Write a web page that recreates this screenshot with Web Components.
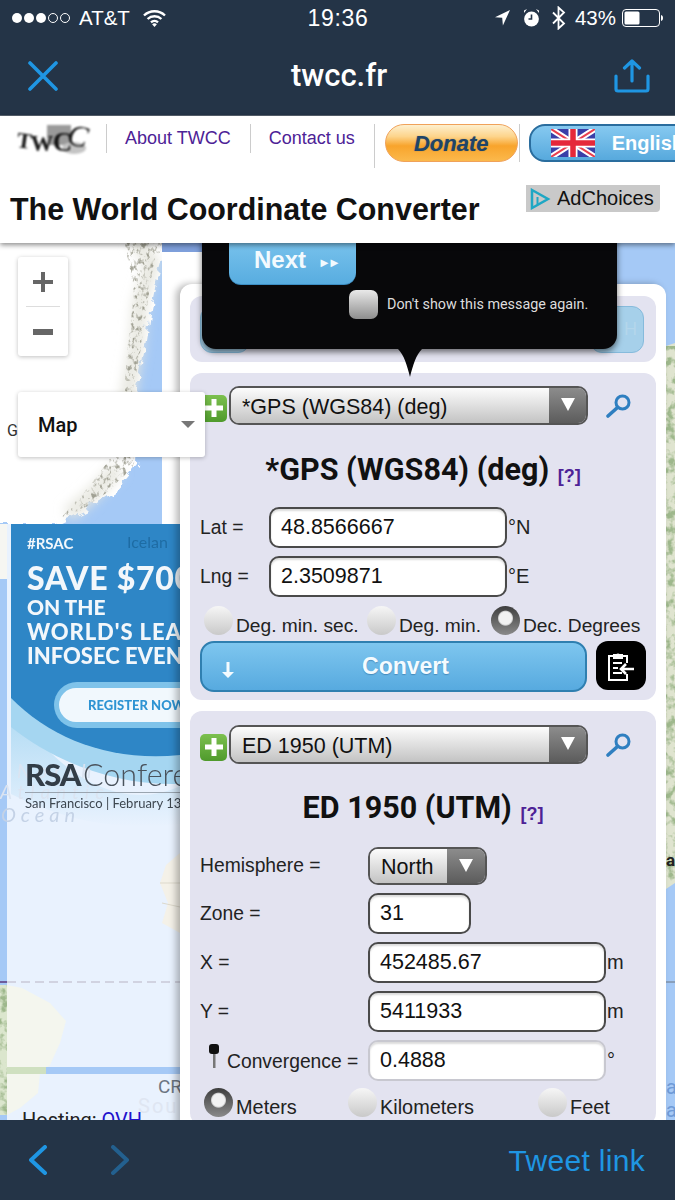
<!DOCTYPE html>
<html lang="en">
<head>
<meta charset="utf-8">
<title>twcc.fr</title>
<style>
  html, body { margin: 0; padding: 0; }
  body {
    width: 675px; height: 1200px; overflow: hidden;
    display: flex; flex-direction: column;
    font-family: "Liberation Sans", Arial, sans-serif; color: #111;
    background: #243447;
  }
</style>
</head>
<body>
<ios-header></ios-header>
<site-header></site-header>
<map-view>
  <map-canvas></map-canvas>
  <rsa-ad></rsa-ad>
  <zoom-control></zoom-control>
  <converter-panel>
    <coord-card heading="*GPS (WGS84) (deg)" style="--label:69px;--pad:13px;--title-top:25px;--title-bottom:17px">
      <coord-row label="Lat =" unit="°N"><coord-input value="48.8566667" width="238"></coord-input></coord-row>
      <coord-row label="Lng =" unit="°E"><coord-input value="2.3509871" width="238"></coord-input></coord-row>
      <radio-group columns="163px 124px 1fr">
        <radio-opt label="Deg. min. sec."></radio-opt>
        <radio-opt label="Deg. min."></radio-opt>
        <radio-opt label="Dec. Degrees" checked></radio-opt>
      </radio-group>
      <convert-bar></convert-bar>
    </coord-card>
    <coord-card heading="ED 1950 (UTM)" style="--label:168px;--pad:14px;--title-top:24px;--title-bottom:19px">
      <coord-row label="Hemisphere ="><gel-select width="119" height="38" arrow="38">North</gel-select></coord-row>
      <coord-row label="Zone ="><coord-input value="31" width="103"></coord-input></coord-row>
      <coord-row label="X =" unit="m"><coord-input value="452485.67" width="238"></coord-input></coord-row>
      <coord-row label="Y =" unit="m"><coord-input value="5411933" width="238"></coord-input></coord-row>
      <coord-row label="Convergence =" unit="°" pin><coord-input value="0.4888" width="238" faint></coord-input></coord-row>
      <radio-group columns="144px 190px 1fr" style="margin-top:-1px;--radio-size:19.900px">
        <radio-opt label="Meters" checked></radio-opt>
        <radio-opt label="Kilometers"></radio-opt>
        <radio-opt label="Feet"></radio-opt>
      </radio-group>
    </coord-card>
  </converter-panel>
  <layer-select></layer-select>
</map-view>
<ios-toolbar></ios-toolbar>

<script>
const BLUE = '#1f96e3';

class IosHeader extends HTMLElement {
  connectedCallback() {
    this.attachShadow({ mode: 'open' });
    this.shadowRoot.innerHTML = `
      <style>
        :host { display: block; flex: none; height: 116px; background: #243447; color: #fff; position: relative; z-index: 3; box-sizing: border-box; }
        .status { height: 36px; display: grid; grid-template-columns: 1fr auto 1fr; align-items: center; padding: 0 12px; font-size: 20.500px; }
        .left, .right { display: flex; align-items: center; }
        .right { justify-content: flex-end; }
        .dots { display: flex; gap: 2px; margin-right: 9px; }
        .dots i { width: 10px; height: 10px; border-radius: 50%; background: #fff; box-sizing: border-box; }
        .dots i.off { background: none; border: 1px solid #fff; }
        .time { font-size: 23px; letter-spacing: .7px; padding-left: 1px; }
        .nav { height: 79px; display: grid; grid-template-columns: 1fr auto 1fr; align-items: center; padding: 0 25px 0 28px; border-bottom: 1px solid #58636f; }
        .nav b { font: 500 31px Roboto, sans-serif; }
        .nav svg:last-child { justify-self: end; }
      </style>
      <div class="status">
        <div class="left">
          <div class="dots"><i></i><i></i><i></i><i class="off"></i><i class="off"></i></div>
          <span>AT&amp;T</span>
          <svg style="margin-left:13px" width="23" height="18" viewBox="0 0 23 18" fill="none" stroke="#fff" stroke-width="2.4"><path d="M1 6.5a15 15 0 0 1 21 0"/><path d="M4.6 10a10 10 0 0 1 13.8 0"/><path d="M8 13.4a5.2 5.2 0 0 1 7 0"/><path d="M11.5 18l-2.4-2.8a3.6 3.6 0 0 1 4.8 0z" fill="#fff" stroke="none"/></svg>
        </div>
        <div class="time">19:36</div>
        <div class="right">
          <svg width="15" height="16" viewBox="0 0 15 16"><path d="M15 0L0 7.2l7.2.6.7 7.7z" fill="#fff"/></svg>
          <svg style="margin-left:12px" width="19" height="20" viewBox="0 0 19 20"><path d="M2 2.5L5 1 2 5zM17 2.5L14 1l3 4z" fill="#fff"/><circle cx="9.5" cy="11" r="7.4" fill="#fff"/><path d="M9.5 6.5V11H6.5" stroke="#243447" stroke-width="1.6" fill="none"/></svg>
          <svg style="margin-left:10px" width="15" height="24" viewBox="0 0 15 24" fill="none" stroke="#fff" stroke-width="1.8"><path d="M2 6.5l11 11-5.5 5V1.5l5.500 5-11 11"/></svg>
          <span style="margin-left:9px">43%</span>
          <svg style="margin-left:6px" width="41" height="18" viewBox="0 0 41 18"><rect x=".5" y=".5" width="37" height="17" rx="3.500" fill="none" stroke="#fff"/><rect x="2.500" y="2.500" width="15" height="13" rx="1.500" fill="#fff"/><path d="M39 6c1.500.3 2 1.500 2 3s-.5 2.700-2 3z" fill="#fff"/></svg>
        </div>
      </div>
      <div class="nav">
        <svg width="30" height="30" viewBox="0 0 30 30" stroke="${BLUE}" stroke-width="3.600" stroke-linecap="round"><path d="M2 2l26 26M28 2L2 28"/></svg>
        <b>twcc.fr</b>
        <svg width="36" height="34" viewBox="0 0 36 34" fill="none" stroke="${BLUE}" stroke-width="3.200" stroke-linecap="round" stroke-linejoin="round"><path d="M18 22V2M10.500 9L18 2l7.500 7"/><path d="M2 17v13a2 2 0 0 0 2 2h28a2 2 0 0 0 2-2V17"/></svg>
      </div>`;
  }
}

class SiteHeader extends HTMLElement {
  connectedCallback() {
    this.attachShadow({ mode: 'open' });
    this.shadowRoot.innerHTML = `
      <style>
        :host { display: block; flex: none; height: 127px; background: #fff; box-shadow: 0 2px 5px rgba(0,0,0,.45); position: relative; z-index: 3; overflow: hidden; }
        .row1 { display: flex; align-items: flex-start; padding-top: 8px; height: 44px; }
        .logo { width: 106px; height: 32px; flex: none; position: relative; font: 700 27px "Liberation Serif", serif; color: #111; filter: blur(.9px); box-sizing: border-box; padding: 0 0 0 17px; line-height: 33px; white-space: nowrap; }
        .logo::before { content: ""; position: absolute; left: 47px; top: 1px; width: 24px; height: 20px; background: #9a9a9a; }
        .logo::after { content: ""; position: absolute; left: 62px; top: 18px; width: 24px; height: 12px; background: #c4c4c4; border-radius: 50%; }
        .logo span { position: relative; z-index: 1; display: inline-block; }
        .logo .t { transform: translateY(-3px) rotate(8deg); font-size: 22px; }
        .logo .w { transform: translateY(0) scaleX(.95); margin-left: -2px; font-size: 24px; }
        .logo .c1 { transform: translateY(0); margin-left: -1px; }
        .logo .c2 { transform: translateY(-5px) rotate(12deg); font-style: italic; font-weight: 400; font-size: 30px; margin-left: -4px; }
        .sep { width: 1px; height: 29px; background: #ccc; flex: none; }
        .sep.tall { height: 44px; }
        .sep.mid { height: 38px; }
        a { color: #4d2296; font-size: 18px; padding: 4px 19px 0 18px; text-decoration: none; flex: none; white-space: nowrap; }
        .donate { flex: none; width: 133px; height: 38px; margin: 0 1px 0 10px; box-sizing: border-box; border: 1px solid #f0a25a; border-radius: 19px;
          background: linear-gradient(#fdf0cf 0, #fdd48b 32%, #f8a42c 58%, #fbb94c 100%); text-align: center;
          font: italic 700 22px/37px "Liberation Sans", sans-serif; color: #1f4468; text-shadow: 0 0 1px rgba(31,68,104,.6); }
        .english { flex: none; width: 200px; height: 38px; margin-left: 9px; box-sizing: border-box; border: 2px solid #2a6d9e; border-radius: 16px 0 0 16px;
          background: linear-gradient(#86c9f0, #57a9dd); display: flex; align-items: center; padding-left: 20px; color: #fff; font-weight: 700; font-size: 20px; }
        .english svg { margin-right: 17px; }
        .row2 { display: flex; justify-content: space-between; padding: 0 15px 0 10px; height: 60px; margin-top: 8px; }
        h1 { margin: 0; font-size: 30.450px; font-weight: 700; line-height: 34px; padding-top: 16px; white-space: nowrap; }
        .ad { box-sizing: border-box; margin-top: 9px; width: 134px; height: 27px; background: #c9c9c9; border-radius: 0 0 4px 0; display: flex; align-items: center; gap: 6px; padding-left: 3px; font-size: 20px; color: #111; }
      </style>
      <div class="row1">
        <div class="logo"><span class="t">T</span><span class="w">W</span><span class="c1">C</span><span class="c2">C</span></div>
        <div class="sep"></div>
        <a>About TWCC</a>
        <div class="sep"></div>
        <a>Contact us</a>
        <div class="sep tall"></div>
        <div class="donate">Donate</div>
        <div class="sep mid"></div>
        <div class="english">
          <svg width="44" height="28" viewBox="0 0 44 28">
            <rect width="44" height="28" fill="#3a3fa8"/>
            <path d="M0 0l44 28M44 0L0 28" stroke="#fff" stroke-width="6"/>
            <path d="M0 0l44 28M44 0L0 28" stroke="#e8404f" stroke-width="2"/>
            <path d="M22 0v28M0 14h44" stroke="#fff" stroke-width="9"/>
            <path d="M22 0v28M0 14h44" stroke="#e5283a" stroke-width="5.500"/>
          </svg>
          English
        </div>
      </div>
      <div class="row2">
        <h1>The World Coordinate Converter</h1>
        <div class="ad">
          <svg width="22" height="22" viewBox="0 0 22 22" fill="none" stroke="#1ea7c4" stroke-width="2.500"><path d="M3 2l16 9-16 9z"/><path d="M8.500 9v7" stroke-width="2"/></svg>
          AdChoices
        </div>
      </div>`;
  }
}

class MapView extends HTMLElement {
  connectedCallback() {
    this.attachShadow({ mode: 'open' });
    this.shadowRoot.innerHTML = `
      <style>
        :host { display: block; flex: 1; min-height: 0; position: relative; overflow: hidden; background: #a5c9f6; z-index: 1; }
      </style>
      <slot></slot>`;
  }
}

class MapCanvas extends HTMLElement {
  connectedCallback() {
    this.attachShadow({ mode: 'open' });
    this.shadowRoot.innerHTML = `
      <style>
        :host { position: absolute; inset: 0; display: block; }
        svg { display: block; }
        text { font-family: Roboto, "Liberation Sans", sans-serif; }
      </style>
      <svg width="675" height="877" viewBox="0 0 675 877">
        <defs>
          <filter id="edge" x="-20%" y="-5%" width="140%" height="110%">
            <feTurbulence type="fractalNoise" baseFrequency=".09" numOctaves="3" seed="7"/>
            <feDisplacementMap in="SourceGraphic" scale="13"/>
          </filter>
          <filter id="rock" x="-10%" y="-5%" width="120%" height="110%" color-interpolation-filters="sRGB">
            <feTurbulence type="fractalNoise" baseFrequency=".26 .18" numOctaves="3" seed="11"/>
            <feColorMatrix values="0 0 0 0 .56  0 0 0 0 .56  0 0 0 0 .5  4 0 0 0 -2"/>
            <feComposite in2="SourceGraphic" operator="in"/>
          </filter>
          <filter id="soft" x="-40%" y="-10%" width="180%" height="120%"><feGaussianBlur stdDeviation="6"/></filter>
          <filter id="terrain" x="0" y="0" width="100%" height="100%" color-interpolation-filters="sRGB">
            <feTurbulence type="fractalNoise" baseFrequency=".12" numOctaves="3" seed="3"/>
            <feColorMatrix values="0 0 0 0 .62  0 0 0 0 .72  0 0 0 0 .55  4 0 0 0 -1.800"/>
            <feComposite in2="SourceGraphic" operator="in"/>
          </filter>
        </defs>
        <rect width="675" height="877" fill="#a5c9f6"/>
        <!-- Greenland coast -->
        <path d="M-30 -10H170L158 30 150 70 144 110 136 150 140 190 138 222 116 248 84 268 56 281H-30Z" fill="#fff" filter="url(#edge)"/>
        <path d="M134 -5L152 20 140 60 136 105 128 150 136 195 M118 225 94 250 68 272" fill="none" stroke="#e6e6de" stroke-width="14" filter="url(#soft)"/>
        <path d="M124 -5L165 -5 152 30 146 70 140 110 132 150 136 190 134 222 112 246 80 268 62 274 92 240 118 205 124 150 128 100 134 50Z" fill="#000" filter="url(#rock)" opacity=".8"/>
        <!-- white frame behind the panel -->
        <rect x="162" y="0" width="60" height="9" fill="#7e9fdb"/>
        <rect x="162" y="9" width="60" height="300" fill="#fff"/>
        <!-- pale column -->
        <rect x="0" y="281" width="7" height="55" fill="#f6f6f2"/>
        <rect x="0" y="336" width="7" height="541" fill="#a5c9f6"/>
        <rect x="7" y="281" width="173" height="596" fill="#e9f2fe"/>
        <rect x="0" y="738" width="7" height="2" fill="#6d5d9c"/>
        <path d="M7 739H180" stroke="#c9c9d8" stroke-width="1.500" stroke-dasharray="9 5"/>
        <!-- continents under the veil -->
        <path d="M180 610L166 622 160 640 168 660 162 680 180 690Z" fill="#f4f1e8"/>
        <path d="M160 640H180M162 660L180 664" stroke="#ddd9cc" fill="none"/>
        <path d="M7 742L22 745 50 760 66 778 60 800 50 822 40 830 38 850 20 865 7 872Z" fill="#f4f6ee"/>
        <rect x="46" y="824" width="134" height="7" fill="#a5c9f6"/>
        <rect x="7" y="824" width="39" height="7" fill="#cfe0c0"/>
        <rect x="0" y="742" width="7" height="130" fill="#dbe6cd"/>
        <rect x="0" y="742" width="7" height="130" fill="#000" filter="url(#terrain)"/>
        <text x="158" y="850" font-size="19" fill="#6d7682">CR</text>
        <text x="138" y="870" font-size="20" fill="#dfe6f2" letter-spacing="2">Sou</text>
        <text x="22" y="884" font-size="20" font-family="Liberation Sans" fill="#222">Hosting: <tspan fill="#2211cc">OVH</tspan></text>
        <text x="7" y="193" font-size="16" fill="#333">G</text>
        <!-- right edge land -->
        <path d="M666 103L675 100V640L666 646Z" fill="#dfe4cf"/>
        <rect x="666" y="103" width="9" height="537" fill="#000" filter="url(#terrain)"/>
        <path d="M666 739H675" stroke="#6d7682" stroke-width="1"/>
        <text x="666" y="623" font-size="17" font-weight="700" fill="#222">a</text>
        <text x="666" y="851" font-size="20" fill="#6f9bd8">a</text>
        <text x="666" y="874" font-size="20" fill="#6f9bd8">a</text>
      </svg>`;
  }
}

class RsaAd extends HTMLElement {
  connectedCallback() {
    this.attachShadow({ mode: 'open' });
    this.shadowRoot.innerHTML = `
      <style>
        :host { position: absolute; left: 0; top: 281px; width: 180px; height: 310px; display: block; }
        svg { display: block; }
        text { font-family: Lato, "Open Sans", sans-serif; }
      </style>
      <svg width="180" height="310" viewBox="-11 0 180 310">
        <defs>
          <linearGradient id="pale" x1="0" y1="0" x2="0" y2="1"><stop offset="0" stop-color="#a9d8f2"/><stop offset="1" stop-color="#e9f2fe"/></linearGradient>
          <filter id="b"><feGaussianBlur stdDeviation=".35"/></filter>
        </defs>
        <path d="M0 174C40 250 110 290 169 262V300C100 310 40 290 0 270Z" fill="url(#pale)"/>
        <path d="M0 0H169V260C100 262 40 235 0 203Z" fill="#a5d6f1"/>
        <path d="M0 0H169V231C100 238 40 215 0 174Z" fill="#2e86c6"/>
        <g filter="url(#b)">
          <text x="6" y="254" font-size="19" font-style="italic" letter-spacing="7" fill="#dbe4f1" font-family="Roboto">North</text>
          <text x="-11" y="275" font-size="19" font-style="italic" letter-spacing="6" fill="#dbe4f1" font-family="Roboto">Atlantic</text>
          <text x="-10" y="298" font-size="20" font-style="italic" letter-spacing="5" fill="#c4d2e6" font-family="Roboto">Ocean</text>
          <text x="116" y="24" font-size="16" fill="#1f6ca4" font-family="Roboto">Icelan</text>
          <text x="16" y="25" font-size="15" font-weight="700" fill="#f2f7fb">#RSAC</text>
          <text x="16" y="66" font-size="32" font-weight="900" letter-spacing=".7" fill="#f2f7fb">SAVE $700</text>
          <text x="16" y="91" font-size="21" font-weight="900" fill="#f2f7fb">ON THE</text>
          <text x="16" y="116" font-size="22" font-weight="900" letter-spacing=".9" fill="#f2f7fb">WORLD'S LEADING</text>
          <text x="16" y="140" font-size="22" font-weight="900" fill="#f2f7fb">INFOSEC EVENT</text>
          <rect x="43" y="158" width="200" height="46" rx="23" fill="#7fc3ea"/>
          <rect x="48" y="164" width="190" height="34" rx="17" fill="#f1f8fd"/>
          <text x="77" y="186" font-size="13" font-weight="900" fill="#2f94d3">REGISTER NOW</text>
          <text x="14" y="262" font-size="31" font-weight="900" fill="#333c47" letter-spacing="-1">RSA</text>
          <text x="72" y="262" font-size="30.500" font-weight="300" fill="#4a525c">Conference</text>
          <rect x="14" y="268" width="155" height="1" fill="#9aa5b0"/>
          <text x="14" y="284" font-size="13" fill="#3d4650">San Francisco | February 13-17</text>
        </g>
      </svg>`;
  }
}

class ZoomControl extends HTMLElement {
  connectedCallback() {
    this.attachShadow({ mode: 'open' });
    this.shadowRoot.innerHTML = `
      <style>
        :host { position: absolute; left: 18px; top: 14px; width: 50px; height: 99px; background: #fff; border-radius: 3px; box-shadow: 0 1px 4px rgba(0,0,0,.25); display: flex; flex-direction: column; align-items: center; }
        div { flex: 1; display: flex; align-items: center; justify-content: center; width: 100%; }
        hr { width: 34px; margin: 0; border: 0; border-top: 1px solid #ddd; }
      </style>
      <div><svg width="20" height="20" viewBox="0 0 20 20"><path d="M8 0h4v8h8v4h-8v8H8v-8H0V8h8z" fill="#666"/></svg></div>
      <hr>
      <div><svg width="20" height="6" viewBox="0 0 20 6"><rect width="20" height="6" fill="#666"/></svg></div>`;
  }
}

class LayerSelect extends HTMLElement {
  connectedCallback() {
    this.attachShadow({ mode: 'open' });
    this.shadowRoot.innerHTML = `
      <style>
        :host { position: absolute; left: 18px; top: 149px; width: 187px; height: 65px; background: #fff; border-radius: 3px; box-shadow: 0 1px 4px rgba(0,0,0,.25); display: flex; align-items: center; justify-content: space-between; padding: 0 10px 0 20px; box-sizing: border-box; font: 500 20px Roboto, sans-serif; color: #111; }
      </style>
      <span>Map</span>
      <svg width="14" height="7" viewBox="0 0 14 7"><path d="M0 0h14L7 7z" fill="#777"/></svg>`;
  }
}

class ConverterPanel extends HTMLElement {
  connectedCallback() {
    this.attachShadow({ mode: 'open' });
    this.shadowRoot.innerHTML = `
      <style>
        :host { position: absolute; left: 180px; top: 41px; width: 486px; box-sizing: border-box; background: #fff; border-radius: 12px 12px 0 0; box-shadow: -4px 0 7px rgba(0,0,0,.28); padding: 12px 10px 20px; display: flex; flex-direction: column; gap: 11px; }
        .group { height: 66px; background: #e3e3f0; border-radius: 12px; padding: 10px 12px 0 10px; box-sizing: border-box; display: flex; justify-content: space-between; }
        .group div { height: 47px; background: #a6d0ea; border: 1px solid #86bbdc; border-radius: 12px; box-sizing: border-box; }
        .group .l { width: 50px; }
        .group .r { width: 54px; color: #b4d6eb; text-align: right; padding-right: 6px; line-height: 44px; font-size: 18px; }
        .tip { position: absolute; left: 22px; top: -49px; width: 415px; box-sizing: border-box; background: #08080a; border-radius: 0 0 14px 14px; box-shadow: 0 3px 6px rgba(0,0,0,.55); padding: 0 0 30px 27px; color: #fff; z-index: 2; }
        .tip svg.tail { position: absolute; left: 196px; top: 100%; }
        .next { width: 127px; height: 50px; box-sizing: border-box; background: linear-gradient(#7dc5ee, #58ade0); border-radius: 0 0 12px 12px; border-bottom: 1px solid #3c8ec4; font-size: 24px; font-weight: 700; display: flex; align-items: flex-end; padding: 0 0 10px 25px; gap: 12px; color: #f3fafe; }
        .next span { font-size: 13px; letter-spacing: -3px; line-height: 22px; }
        .check { display: flex; align-items: center; gap: 9px; margin: 5px 0 0 120px; font: 14.350px Roboto, sans-serif; color: #ddd; }
        .check i { width: 29px; height: 29px; border-radius: 7px; background: linear-gradient(#e9e9e9, #8e8e8e); flex: none; }
      </style>
      <div class="group"><div class="l"></div><div class="r">H</div></div>
      <slot></slot>
      <div class="tip">
        <div class="next">Next <span>►►</span></div>
        <div class="check"><i></i>Don't show this message again.</div>
        <svg class="tail" width="24" height="28" viewBox="0 0 24 28"><path d="M0 0H24C18 6 15 16 12 28 9 16 6 6 0 0Z" fill="#08080a"/></svg>
      </div>`;
  }
}

class CoordCard extends HTMLElement {
  connectedCallback() {
    this.attachShadow({ mode: 'open' });
    this.shadowRoot.innerHTML = `
      <style>
        :host { display: block; background: #e3e3f0; border-radius: 12px; padding: var(--pad) 10px 8px; }
        .picker { display: flex; align-items: center; height: 39px; }
        .plus { width: 27px; height: 27px; border-radius: 5px; background: linear-gradient(#7cc04f, #4f9a2c); margin: 5px 2px 0 0; display: flex; align-items: center; justify-content: center; flex: none; }
        .mag { margin: 0 0 0 18px; }
        h2 { margin: var(--title-top) 0 var(--title-bottom); height: 40px; font: 700 30.500px/40px Roboto, sans-serif; text-align: center; color: #111; white-space: nowrap; }
        h2 a { font: 700 18px/18px "Liberation Sans", sans-serif; color: #4d2296; vertical-align: -2px; margin-left: 1px; }
        .rows { display: flex; flex-direction: column; gap: 8px; }
      </style>
      <div class="picker">
        <div class="plus"><svg width="18" height="18" viewBox="0 0 18 18"><path d="M6.500 0h5v6.500H18v5h-6.500V18h-5v-6.500H0v-5h6.500z" fill="#fff"/></svg></div>
        <gel-select width="359" height="39" arrow="37">${this.getAttribute('heading')}</gel-select>
        <svg class="mag" width="25" height="24" viewBox="0 0 25 24" fill="none"><circle cx="16.500" cy="8.500" r="6.500" stroke="#2f7fc0" stroke-width="3"/><path d="M11.500 13.500L2 22" stroke="#2f7fc0" stroke-width="3.600" stroke-linecap="round"/></svg>
      </div>
      <h2>${this.getAttribute('heading')} <a>[?]</a></h2>
      <div class="rows"><slot></slot></div>`;
  }
}

class GelSelect extends HTMLElement {
  connectedCallback() {
    const w = this.getAttribute('width'), h = this.getAttribute('height'), a = this.getAttribute('arrow');
    this.attachShadow({ mode: 'open' });
    this.shadowRoot.innerHTML = `
      <style>
        :host { display: flex; flex: none; width: ${w}px; height: ${h}px; box-sizing: border-box; border: 2px solid #555; border-radius: 10px; overflow: hidden; font-size: 21.500px; color: #111; }
        .txt { flex: 1; display: flex; align-items: center; padding: 3px 0 0 11px; background: linear-gradient(#fcfcfc, #c3c3c3); white-space: nowrap; overflow: hidden; }
        .arr { width: ${a}px; flex: none; background: linear-gradient(#8c8c8c, #5c5c5c); display: flex; justify-content: center; padding-top: 10px; box-sizing: border-box; }
      </style>
      <div class="txt"><slot></slot></div>
      <div class="arr"><svg width="14" height="13" viewBox="0 0 14 13"><path d="M0 0h14L7 13z" fill="#fff"/></svg></div>`;
  }
}

class CoordRow extends HTMLElement {
  connectedCallback() {
    const pin = this.hasAttribute('pin');
    this.attachShadow({ mode: 'open' });
    this.shadowRoot.innerHTML = `
      <style>
        :host { display: flex; align-items: center; font-size: 19.300px; color: #222; }
        .label { width: var(--label); flex: none; display: flex; align-items: flex-end; white-space: nowrap; }
        .unit { margin-left: 1px; font-size: 20px; }
        .pin { margin: 0 7px 0 8px; transform: translateY(-5px); }
      </style>
      <div class="label">${pin ? '<svg class="pin" width="12" height="24" viewBox="0 0 12 24"><rect x="1" y="0" width="10" height="10" rx="3" fill="#111"/><rect x="5" y="10" width="2.500" height="14" fill="#777"/></svg>' : ''}${this.getAttribute('label')}</div>
      <slot></slot>
      ${this.hasAttribute('unit') ? `<span class="unit">${this.getAttribute('unit')}</span>` : ''}`;
  }
}

class CoordInput extends HTMLElement {
  connectedCallback() {
    const faint = this.hasAttribute('faint');
    this.attachShadow({ mode: 'open' });
    this.shadowRoot.innerHTML = `
      <style>
        :host { display: flex; align-items: center; flex: none; width: ${this.getAttribute('width')}px; height: 41px; box-sizing: border-box; background: #fff; border: 2px solid ${faint ? '#c8c8d0' : '#4a4a4a'}; border-radius: 10px; padding-left: 10px; box-shadow: inset 0 2px 2px rgba(0,0,0,.14); font-size: 21.500px; color: #111; }
      </style>
      ${this.getAttribute('value')}`;
  }
}

class RadioGroup extends HTMLElement {
  connectedCallback() {
    this.attachShadow({ mode: 'open' });
    this.shadowRoot.innerHTML = `
      <style>
        :host { display: grid; grid-template-columns: ${this.getAttribute('columns')}; padding-left: 4px; margin-top: 1px; }
      </style>
      <slot></slot>`;
  }
}

class RadioOpt extends HTMLElement {
  connectedCallback() {
    const on = this.hasAttribute('checked');
    this.attachShadow({ mode: 'open' });
    this.shadowRoot.innerHTML = `
      <style>
        :host { display: flex; align-items: flex-start; gap: 3px; height: 29px; font-size: var(--radio-size, 19.200px); color: #222; white-space: nowrap; }
        i { width: 29px; height: 29px; border-radius: 50%; flex: none; box-sizing: border-box; display: block; background: linear-gradient(#f6f6f6, #c9c9c9); }
        i.on { background: radial-gradient(circle at 50% 42%, #f2f2f2 0 6px, #d0d0d0 7px, transparent 8px), linear-gradient(#3e3e3e, #8a8a8a); }
        span { padding-top: 8px; line-height: 23px; }
      </style>
      <i class="${on ? 'on' : ''}"></i><span>${this.getAttribute('label')}</span>`;
  }
}

class ConvertBar extends HTMLElement {
  connectedCallback() {
    this.attachShadow({ mode: 'open' });
    this.shadowRoot.innerHTML = `
      <style>
        :host { display: flex; align-items: flex-start; gap: 9px; margin-top: -2px; }
        .btn { width: 387px; height: 51px; box-sizing: border-box; flex: none; border: 2px solid #2f7fb0; border-radius: 14px; background: linear-gradient(#7ec6ef, #57aadf); display: flex; align-items: center; justify-content: center; padding-left: 24px; color: #f4fbff; font-size: 23px; font-weight: 700; position: relative; text-shadow: 0 1px 1px rgba(40,100,150,.5); }
        .btn svg { position: absolute; left: 20px; top: 19px; }
        .clip { width: 50px; height: 49px; background: #000; border-radius: 12px; flex: none; display: flex; align-items: center; justify-content: center; }
      </style>
      <div class="btn">
        <svg width="12" height="16" viewBox="0 0 12 16"><path d="M4.500 0h3v10H12l-6 6-6-6h4.500z" fill="#f4fbff"/></svg>
        Convert
      </div>
      <div class="clip">
        <svg width="28" height="30" viewBox="0 0 28 30" fill="none" stroke="#fff" stroke-width="2"><path d="M7 5H2v24h18v-6M20 12V5h-5"/><path d="M7 7V4h2.500a2.500 2.500 0 0 1 3 0H15v3z" fill="#fff"/><path d="M6 12h9M6 17h5M6 22h9"/><path d="M27 18H15M19 13l-5 5 5 5" stroke-width="2.600"/></svg>
      </div>`;
  }
}

class IosToolbar extends HTMLElement {
  connectedCallback() {
    this.attachShadow({ mode: 'open' });
    this.shadowRoot.innerHTML = `
      <style>
        :host { flex: none; height: 80px; background: #243447; display: flex; align-items: center; padding: 0 30px 0 29px; position: relative; z-index: 3; box-sizing: border-box; }
        svg + svg { margin-left: 64px; }
        span { margin-left: auto; color: ${BLUE}; font-size: 30px; position: relative; top: 1px; letter-spacing: .3px; }
      </style>
      <svg width="18" height="30" viewBox="0 0 18 30" fill="none" stroke="${BLUE}" stroke-width="4" stroke-linecap="round" stroke-linejoin="round"><path d="M16 2L2 15l14 13"/></svg>
      <svg width="18" height="30" viewBox="0 0 18 30" fill="none" stroke="#23608f" stroke-width="4" stroke-linecap="round" stroke-linejoin="round"><path d="M2 2l14 13L2 28"/></svg>
      <span>Tweet link</span>`;
  }
}

customElements.define('ios-header', IosHeader);
customElements.define('site-header', SiteHeader);
customElements.define('map-view', MapView);
customElements.define('map-canvas', MapCanvas);
customElements.define('rsa-ad', RsaAd);
customElements.define('zoom-control', ZoomControl);
customElements.define('layer-select', LayerSelect);
customElements.define('converter-panel', ConverterPanel);
customElements.define('coord-card', CoordCard);
customElements.define('gel-select', GelSelect);
customElements.define('coord-row', CoordRow);
customElements.define('coord-input', CoordInput);
customElements.define('radio-group', RadioGroup);
customElements.define('radio-opt', RadioOpt);
customElements.define('convert-bar', ConvertBar);
customElements.define('ios-toolbar', IosToolbar);
</script>
</body>
</html>
